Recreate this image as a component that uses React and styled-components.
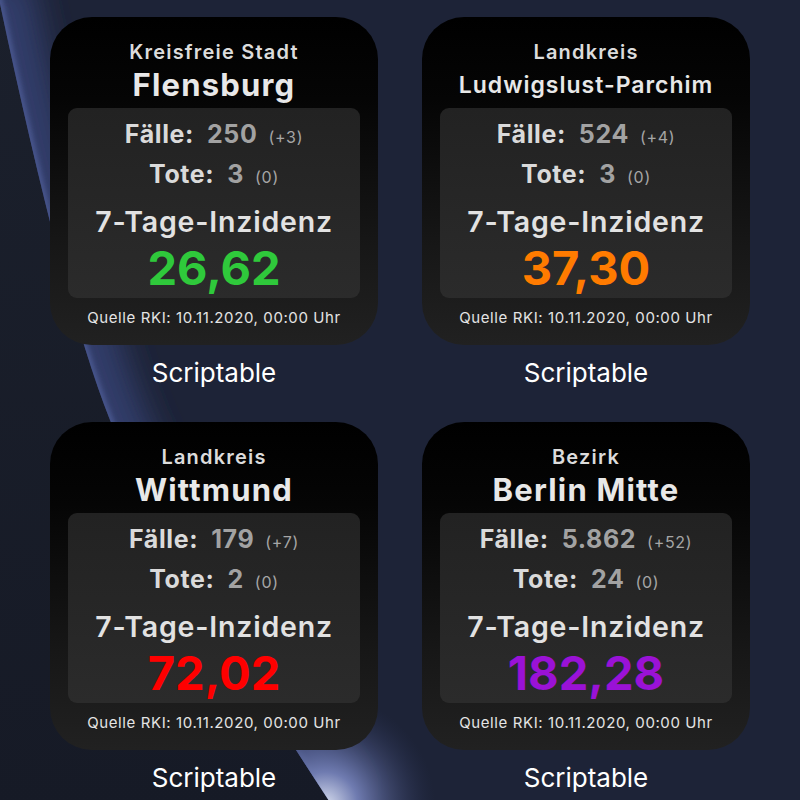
import React from "react";
import styled, { createGlobalStyle } from "styled-components";

const GlobalStyle = createGlobalStyle`
  html, body {
    margin: 0;
    padding: 0;
    background: #1b2030;
  }
  body {
    width: 800px;
    height: 800px;
    overflow: hidden;
    font-family: "Inter", "Liberation Sans", sans-serif;
  }
`;

const widgets = [
  {
    kind: "Kreisfreie Stadt",
    name: "Flensburg",
    cases: "250",
    casesDelta: "+3",
    deaths: "3",
    deathsDelta: "0",
    incidence: "26,62",
    color: "#2fc93b",
  },
  {
    kind: "Landkreis",
    name: "Ludwigslust-Parchim",
    small: true,
    cases: "524",
    casesDelta: "+4",
    deaths: "3",
    deathsDelta: "0",
    incidence: "37,30",
    color: "#ff7b00",
  },
  {
    kind: "Landkreis",
    name: "Wittmund",
    cases: "179",
    casesDelta: "+7",
    deaths: "2",
    deathsDelta: "0",
    incidence: "72,02",
    color: "#ff0000",
  },
  {
    kind: "Bezirk",
    name: "Berlin Mitte",
    cases: "5.862",
    casesDelta: "+52",
    deaths: "24",
    deathsDelta: "0",
    incidence: "182,28",
    color: "#9a12d6",
  },
];

function Wallpaper() {
  const edge = "M -5 -20 Q 62 300 110 420 T 335 810";
  const right = edge + " L 820 810 L 820 -20 Z";
  return (
    <WallpaperSvg viewBox="0 0 800 800" width="800" height="800">
      <defs>
        <clipPath id="rightSide">
          <path d={right} />
        </clipPath>
        <filter id="blurWide" x="-50%" y="-50%" width="200%" height="200%">
          <feGaussianBlur stdDeviation="16" />
        </filter>
        <filter id="blurSoft" x="-50%" y="-50%" width="200%" height="200%">
          <feGaussianBlur stdDeviation="2.5" />
        </filter>
        <radialGradient id="glow" cx="325" cy="805" r="110" gradientUnits="userSpaceOnUse">
          <stop offset="0" stopColor="#d8deef" />
          <stop offset="0.3" stopColor="#6f7bb0" />
          <stop offset="1" stopColor="#2a3358" stopOpacity="0" />
        </radialGradient>
        <linearGradient id="leftShade" x1="0" y1="0" x2="0" y2="1">
          <stop offset="0" stopColor="#1b202c" />
          <stop offset="1" stopColor="#161a26" />
        </linearGradient>
      </defs>
      <rect width="800" height="800" fill="#1b2031" />
      <path d={edge + " L -10 810 Z"} fill="url(#leftShade)" />
      <g clipPath="url(#rightSide)">
        <rect width="800" height="800" fill="#1d2337" />
        <path d={edge} stroke="#323e6a" strokeWidth="70" fill="none" filter="url(#blurWide)" />
        <path d={edge} stroke="#4d5b94" strokeWidth="7" fill="none" filter="url(#blurSoft)" opacity="0.85" />
        <circle cx="325" cy="805" r="110" fill="url(#glow)" />
      </g>
    </WallpaperSvg>
  );
}

function Widget({ data }) {
  return (
    <Cell>
      <Card>
        <Kind>{data.kind}</Kind>
        <Name $small={data.small}>{data.name}</Name>
        <Panel>
          <StatRow>
            <StatLabel>Fälle:</StatLabel>
            <StatValue>{data.cases}</StatValue>
            <StatDelta>({data.casesDelta})</StatDelta>
          </StatRow>
          <StatRow>
            <StatLabel>Tote:</StatLabel>
            <StatValue>{data.deaths}</StatValue>
            <StatDelta>({data.deathsDelta})</StatDelta>
          </StatRow>
          <IncidenceLabel>7-Tage-Inzidenz</IncidenceLabel>
          <IncidenceValue $color={data.color}>{data.incidence}</IncidenceValue>
        </Panel>
        <Source>Quelle RKI: 10.11.2020, 00:00 Uhr</Source>
      </Card>
      <AppLabel>Scriptable</AppLabel>
    </Cell>
  );
}

export default function App() {
  return (
    <>
      <GlobalStyle />
      <Screen>
        <Wallpaper />
        <Grid>
          {widgets.map((w) => (
            <Widget key={w.name} data={w} />
          ))}
        </Grid>
      </Screen>
    </>
  );
}

const Screen = styled.div`
  position: relative;
  width: 800px;
  height: 800px;
  overflow: hidden;
`;

const WallpaperSvg = styled.svg`
  position: absolute;
  left: 0;
  top: 0;
  display: block;
`;

const Grid = styled.div`
  position: relative;
  display: grid;
  grid-template-columns: 328px 328px;
  column-gap: 44px;
  row-gap: 34px;
  padding: 17px 0 0 50px;
`;

const Cell = styled.div`
  display: flex;
  flex-direction: column;
  align-items: center;
`;

const Card = styled.div`
  width: 328px;
  height: 328px;
  box-sizing: border-box;
  padding: 24px 18px 0;
  border-radius: 42px;
  background: linear-gradient(180deg, #000000 0%, #050505 25%, #171717 70%, #212121 100%);
  display: flex;
  flex-direction: column;
  align-items: center;
  color: #e6e6e6;
  text-align: center;
`;

const Kind = styled.div`
  font-size: 20px;
  line-height: 22px;
  font-weight: 600;
  letter-spacing: 1.2px;
  color: #dcdcdc;
  white-space: nowrap;
`;

const Name = styled.div`
  margin-top: 4px;
  height: 36px;
  font-size: ${(p) => (p.$small ? "23px" : "31px")};
  line-height: 36px;
  font-weight: ${(p) => (p.$small ? 600 : 700)};
  letter-spacing: ${(p) => (p.$small ? "1px" : "1.2px")};
  color: #e8e8e8;
  white-space: nowrap;
`;

const Panel = styled.div`
  margin-top: 5px;
  width: 292px;
  height: 190px;
  box-sizing: border-box;
  padding-top: 6px;
  border-radius: 9px;
  background: linear-gradient(180deg, #222222 0%, #2b2b2b 100%);
  display: flex;
  flex-direction: column;
  align-items: center;
`;

const StatRow = styled.div`
  display: flex;
  align-items: baseline;
  height: 40px;
  line-height: 40px;
  font-size: 25px;
  font-weight: 700;
  letter-spacing: 0.6px;
  white-space: nowrap;
`;

const StatLabel = styled.span`
  color: #dadada;
`;

const StatValue = styled.span`
  color: #a2a2a2;
  margin-left: 13px;
`;

const StatDelta = styled.span`
  margin-left: 11px;
  font-size: 16px;
  font-weight: 400;
  color: #a6a6a6;
  letter-spacing: 0.7px;
`;

const IncidenceLabel = styled.div`
  margin-top: 11px;
  font-size: 28.5px;
  line-height: 34px;
  font-weight: 600;
  letter-spacing: 0.8px;
  color: #e2e2e2;
  white-space: nowrap;
`;

const IncidenceValue = styled.div`
  margin-top: 4px;
  font-size: 47px;
  line-height: 50px;
  font-weight: 700;
  color: ${(p) => p.$color};
`;

const Source = styled.div`
  margin-top: 11px;
  font-size: 15px;
  line-height: 18px;
  font-weight: 400;
  letter-spacing: 0.6px;
  color: #e4e4e4;
  white-space: nowrap;
`;

const AppLabel = styled.div`
  margin-top: 13px;
  font-size: 26px;
  line-height: 30px;
  font-weight: 400;
  color: #ffffff;
`;
